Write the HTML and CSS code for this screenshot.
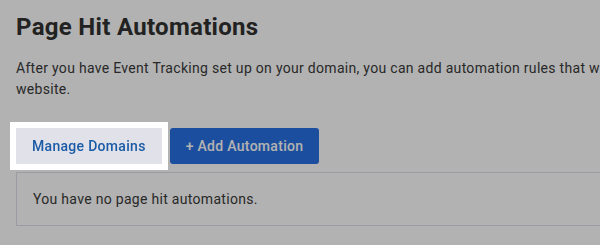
FILE: index.html
```html
<!DOCTYPE html>
<html lang="en">
<head>
    <meta charset="UTF-8">
    <meta name="viewport" content="width=device-width, initial-scale=1.0">
    <title>Page Hit Automations</title>
    <link rel="stylesheet" href="styles.css">
</head>
<body>
    <div class="page">
        <h1>Page Hit Automations</h1>
        <p class="intro">After you have Event Tracking set up on your domain, you can add automation rules that will trigger when a contact visits specific pages on your website.</p>

        <div class="actions">
            <button type="button" class="btn btn-light spotlight">Manage Domains</button>
            <button type="button" class="btn btn-primary">+ Add Automation</button>
        </div>

        <div class="empty-box">You have no page hit automations.</div>
    </div>

    <!-- tour backdrop, the highlighted button sits above it -->
    <div class="backdrop"></div>
</body>
</html>
```

FILE: styles.css
```css
html, body {
    margin: 0;
    overflow: hidden;
}

body {
    font-family: Roboto, "Liberation Sans", Arial, sans-serif;
    letter-spacing: 0.3px;
    background: #fff;
    color: #333;
}

.page {
    width: 970px;
    padding: 13px 16px 0 16px;
}

h1 {
    margin: 0;
    font-size: 24px;
    font-weight: 700;
    line-height: 28px;
    color: #323232;
}

.intro {
    margin: 17px 0 0 0;
    font-size: 14px;
    line-height: 21px;
    color: #3a3a3a;
}

.actions {
    display: flex;
    gap: 8px;
    margin-top: 28px;
}

.btn {
    height: 36px;
    padding: 0 16px;
    border: none;
    border-radius: 3px;
    font-family: inherit;
    font-size: 14px;
    font-weight: 500;
    letter-spacing: 0.3px;
    cursor: pointer;
}

.btn-light {
    background: #e0e1e9;
    color: #1b5ba6;
    border-radius: 0;
}

.btn-primary {
    background: #2870e4;
    color: #fff;
}

/* white frame round the highlighted step */
.spotlight {
    position: relative;
    z-index: 11;
    box-shadow: 0 0 0 6px #fff;
}

.empty-box {
    margin-top: 8px;
    padding: 16px;
    border: 1px solid #dfdfe9;
    font-size: 14px;
    line-height: 20px;
    color: #3a3a3a;
}

.backdrop {
    position: fixed;
    inset: 0;
    background: rgba(0, 0, 0, 0.3);
    z-index: 10;
}
```
